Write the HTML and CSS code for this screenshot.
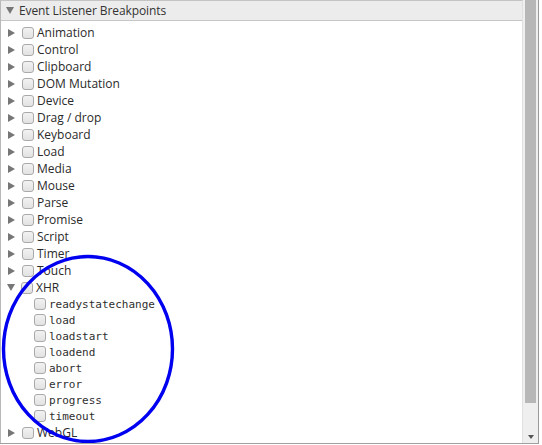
FILE: index.html
```html
<!DOCTYPE html>
<html>
<head>
<meta charset="utf-8">
<link rel="stylesheet" href="styles.css">
</head>
<body>
<div class="frame">
  <div class="pane">
    <div class="header"><span class="tri down"></span><span class="title">Event Listener Breakpoints</span></div>
    <ul class="tree">
      <li class="row"><span class="tri right"></span><span class="cb"></span><span class="label">Animation</span></li>
      <li class="row"><span class="tri right"></span><span class="cb"></span><span class="label">Control</span></li>
      <li class="row"><span class="tri right"></span><span class="cb"></span><span class="label">Clipboard</span></li>
      <li class="row"><span class="tri right"></span><span class="cb"></span><span class="label">DOM Mutation</span></li>
      <li class="row"><span class="tri right"></span><span class="cb"></span><span class="label">Device</span></li>
      <li class="row"><span class="tri right"></span><span class="cb"></span><span class="label">Drag / drop</span></li>
      <li class="row"><span class="tri right"></span><span class="cb"></span><span class="label">Keyboard</span></li>
      <li class="row"><span class="tri right"></span><span class="cb"></span><span class="label">Load</span></li>
      <li class="row"><span class="tri right"></span><span class="cb"></span><span class="label">Media</span></li>
      <li class="row"><span class="tri right"></span><span class="cb"></span><span class="label">Mouse</span></li>
      <li class="row"><span class="tri right"></span><span class="cb"></span><span class="label">Parse</span></li>
      <li class="row"><span class="tri right"></span><span class="cb"></span><span class="label">Promise</span></li>
      <li class="row"><span class="tri right"></span><span class="cb"></span><span class="label">Script</span></li>
      <li class="row"><span class="tri right"></span><span class="cb"></span><span class="label">Timer</span></li>
      <li class="row"><span class="tri right"></span><span class="cb"></span><span class="label">Touch</span></li>
      <li class="row"><span class="tri down"></span><span class="cb"></span><span class="label">XHR</span></li>
      <li class="child"><span class="cb"></span><span class="mono">readystatechange</span></li>
      <li class="child"><span class="cb"></span><span class="mono">load</span></li>
      <li class="child"><span class="cb"></span><span class="mono">loadstart</span></li>
      <li class="child"><span class="cb"></span><span class="mono">loadend</span></li>
      <li class="child"><span class="cb"></span><span class="mono">abort</span></li>
      <li class="child"><span class="cb"></span><span class="mono">error</span></li>
      <li class="child"><span class="cb"></span><span class="mono">progress</span></li>
      <li class="child"><span class="cb"></span><span class="mono">timeout</span></li>
      <li class="row"><span class="tri right"></span><span class="cb"></span><span class="label">WebGL</span></li>
      <li class="row"><span class="tri right"></span><span class="cb"></span></li>
    </ul>
  </div>
  <div class="scrollbar">
    <div class="thumb"></div>
    <div class="arrow"></div>
  </div>
  <svg class="annot" width="176" height="192" viewBox="0 0 176 192"><ellipse cx="87" cy="96" rx="84.5" ry="92.5" fill="none" stroke="#0000f0" stroke-width="3.4"/></svg>
</div>
</body>
</html>
```

FILE: styles.css
```css
html, body {
  margin: 0;
  padding: 0;
  background: #ffffff;
}
body {
  width: 542px;
  height: 445px;
  overflow: hidden;
  font-family: "Open Sans", "DejaVu Sans", sans-serif;
  font-size: 12px;
  color: #2a2a2a;
}
.frame {
  position: relative;
  display: flex;
  width: 539px;
  height: 444px;
  border-right: 1px solid #9a9a9a;
  border-bottom: 1px solid #a0a0a0;
  box-sizing: border-box;
  overflow: hidden;
}
.pane {
  flex: 1;
  border-left: 1px solid #b8b8b8;
  border-top: 1px solid #c4c4c4;
  overflow: hidden;
  border-right: 1px solid #e0e0e0;
}
.header {
  height: 19px;
  background: #ececec;
  border-bottom: 1px solid #c6c6c6;
  display: flex;
  align-items: center;
  padding-left: 5px;
}
.header .title {
  margin-left: 5px;
  color: #333;
  line-height: 19px;
  letter-spacing: -0.1px;
}
.tri {
  display: inline-block;
  width: 0;
  height: 0;
}
.tri.right {
  border-top: 4px solid transparent;
  border-bottom: 4px solid transparent;
  border-left: 7px solid #767676;
}
.tri.down {
  border-left: 4px solid transparent;
  border-right: 4px solid transparent;
  border-top: 7px solid #767676;
}
.tree {
  list-style: none;
  margin: 0;
  padding: 3px 0 0 0;
}
.row {
  height: 17px;
  display: flex;
  align-items: center;
  padding-left: 7px;
}
.row .tri.down {
  margin-left: -1px;
  margin-right: -1px;
}
.cb {
  display: inline-block;
  width: 10px;
  height: 10px;
  border: 1px solid #a9a9a9;
  border-radius: 3px;
  background: linear-gradient(#f2f2f2, #e2e2e2);
  margin-left: 7px;
  flex: none;
}
.label {
  margin-left: 3px;
  line-height: 17px;
}
.child {
  height: 16px;
  display: flex;
  align-items: center;
  padding-left: 26px;
}
.mono {
  font-family: "DejaVu Sans Mono", monospace;
  font-size: 11px;
  margin-left: 3px;
  color: #2f2f2f;
}
.scrollbar {
  width: 15px;
  flex: none;
  background: #efefef;
  position: relative;
  display: flex;
  flex-direction: column;
  align-items: center;
}
.thumb {
  width: 11px;
  height: 403px;
  background: #b7b7b7;
}
.arrow {
  margin-top: 32px;
  width: 0;
  height: 0;
  border-left: 3.5px solid transparent;
  border-right: 3.5px solid transparent;
  border-top: 4px solid #555;
}
.annot {
  position: absolute;
  left: 1px;
  top: 253px;
}
```
